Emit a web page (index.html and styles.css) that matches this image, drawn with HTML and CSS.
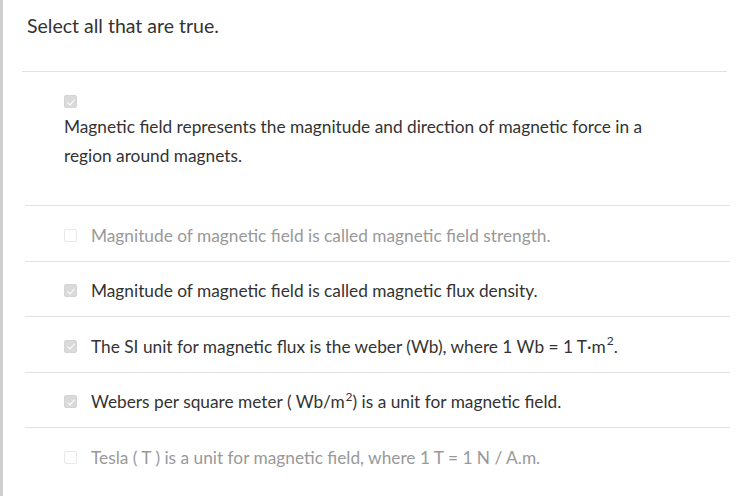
FILE: index.html
```html
<!DOCTYPE html>
<html lang="en">
<head>
    <meta charset="UTF-8">
    <title>Select all that are true</title>
    <link rel="stylesheet" href="styles.css">
</head>
<body>
    <div class="panel">
        <div class="prompt">Select all that are true.</div>
        <div class="rule"></div>
        <div class="lead">
            <span class="box checked"></span>
            <p>Magnetic field represents the magnitude and direction of magnetic force in a region around magnets.</p>
        </div>
        <ul class="options">
            <li class="option muted"><span class="box"></span>Magnitude of magnetic field is called magnetic field strength.</li>
            <li class="option"><span class="box checked"></span>Magnitude of magnetic field is called magnetic flux density.</li>
            <li class="option"><span class="box checked"></span>The SI unit for magnetic flux is the weber (Wb), where 1 Wb = 1 T&middot;m<sup>2</sup>.</li>
            <li class="option"><span class="box checked"></span>Webers per square meter ( Wb/m<sup>2</sup> ) is a unit for magnetic field.</li>
            <li class="option muted last"><span class="box"></span>Tesla ( T ) is a unit for magnetic field, where 1 T = 1 N / A.m.</li>
        </ul>
    </div>
</body>
</html>
```

FILE: styles.css
```css
html, body { margin: 0; padding: 0; height: 100%; background: #fff; }
body { font-family: "Lato", "Open Sans", sans-serif; color: #333; overflow: hidden; }
.panel { height: 100%; border-left: 3px solid #cfcfcf; box-sizing: border-box; }
.prompt { font-size: 19.5px; line-height: 24px; padding: 14px 0 0 24px; color: #333; }
.rule { margin: 33px 17px 0 19px; height: 1px; background: #e2e2e2; }
.lead { margin: 0 14px 0 22px; padding: 23px 0 35px 39px; border-bottom: 1px solid #e2e2e2; }
.lead p { margin: 4px 0 0; max-width: 610px; font-size: 17.3px; line-height: 29px; color: #333; }
.options { list-style: none; margin: 0 14px 0 22px; padding: 0; }
.option { display: flex; align-items: center; height: 54.5px; box-sizing: border-box; height: 55.5px; padding: 4px 0 0 39px; border-bottom: 1px solid #e2e2e2; font-size: 17.3px; color: #333; }
.option.last { border-bottom: none; }
.option.muted { color: #999; }
.option sup { font-size: 12px; line-height: 1; position: relative; top: -5px; vertical-align: baseline; margin-left: 1px; }
.box { display: inline-block; width: 13px; height: 13px; border-radius: 2px; box-sizing: border-box; border: 1px solid #e8e8e8; background: #fff; margin-right: 14px; position: relative; flex: none; }
.lead .box { display: block; }
.box.checked { background: #dadada; border-color: #d4d4d4; }
.box.checked::after { content: ""; position: absolute; left: 3.5px; top: 1.5px; width: 3px; height: 6px; border: solid #fff; border-width: 0 1.5px 1.5px 0; transform: rotate(40deg); }
```
